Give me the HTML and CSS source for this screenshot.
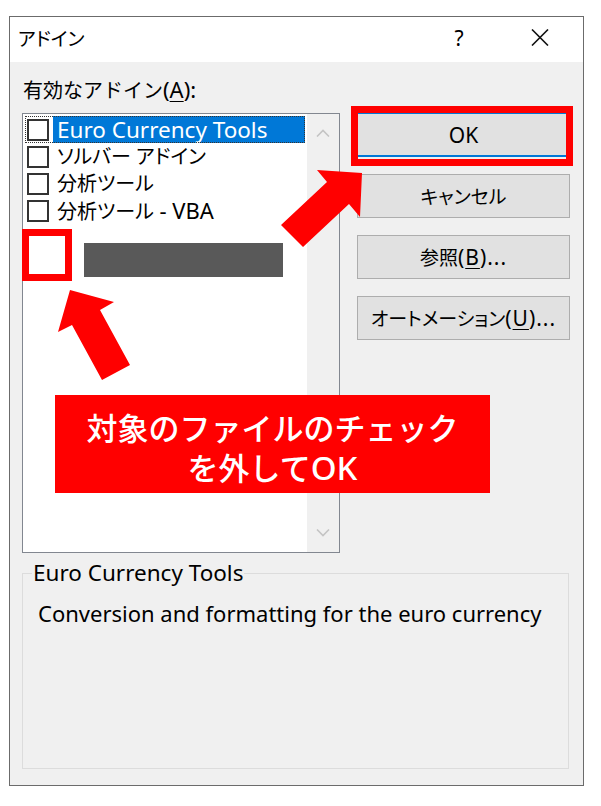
FILE: index.html
```html
<!DOCTYPE html>
<html lang="ja">
<head>
<meta charset="utf-8">
<title>アドイン</title>
<link rel="stylesheet" href="styles.css">
</head>
<body>
<div class="shot">
  <div class="dialog">
    <div class="titlebar">
      <span class="title">アドイン</span>
      <span class="help">?</span>
      <svg class="close" width="18" height="17" viewBox="0 0 18 17"><path d="M1 0.5 L17 16.5 M17 0.5 L1 16.5" stroke="#111" stroke-width="1.6" fill="none"/></svg>
    </div>
    <div class="content">
      <div class="label">有効なアドイン<span class="lat">(<u>A</u>):</span></div>
      <div class="main">
        <div class="listbox">
          <div class="items">
            <div class="item focused"><span class="check"></span><span class="name selected lat">Euro Currency Tools</span></div>
            <div class="item"><span class="check"></span><span class="name">ソルバー アドイン</span></div>
            <div class="item"><span class="check"></span><span class="name">分析ツール</span></div>
            <div class="item"><span class="check"></span><span class="name">分析ツール<span class="lat"> - VBA</span></span></div>
            <div class="item redacted"><span class="blackout"></span></div>
          </div>
          <div class="scrollbar">
            <svg width="14" height="8" viewBox="0 0 14 8"><path d="M1 7.5 L7 1.5 L13 7.5" stroke="#c4c4c4" stroke-width="1.6" fill="none"/></svg>
            <svg width="14" height="8" viewBox="0 0 14 8"><path d="M1 0.5 L7 6.5 L13 0.5" stroke="#c4c4c4" stroke-width="1.6" fill="none"/></svg>
          </div>
        </div>
        <div class="buttons">
          <button class="btn default"><span class="lat">OK</span></button>
          <button class="btn">キャンセル</button>
          <button class="btn">参照<span class="lat">(<u>B</u>)...</span></button>
          <button class="btn">オートメーション<span class="lat">(<u>U</u>)...</span></button>
        </div>
      </div>
      <fieldset class="info">
        <legend>Euro Currency Tools</legend>
        <p>Conversion and formatting for the euro currency</p>
      </fieldset>
    </div>
  </div>

  <!-- annotations drawn over the dialog -->
  <svg class="marks" width="601" height="806" viewBox="0 0 601 806">
    <rect x="354.5" y="109.5" width="215" height="53" fill="none" stroke="#ff0000" stroke-width="7"/>
    <rect x="25.5" y="232.5" width="43" height="45" fill="#fff" stroke="#ff0000" stroke-width="7"/>
    <polygon points="362,173 317,170 327,182 281,225 303,247 349,204 360,217" fill="#ff0000"/>
    <polygon points="70,290 114,302 100,310 130,365 102,380 72,325 58,332" fill="#ff0000"/>
  </svg>
  <div class="callout">対象のファイルのチェック<br>を外して<span class="ok">OK</span></div>
</div>
</body>
</html>
```

FILE: styles.css
```css
body{margin:0;background:#fff;font-family:"Noto Sans","Noto Sans CJK JP",sans-serif;color:#000;font-feature-settings:"palt";}

.shot{position:relative;width:601px;height:806px;padding:16px 0 0 9px;box-sizing:border-box;}

.dialog{width:575px;height:770px;box-sizing:border-box;border:1px solid #6b6b6b;background:#f0f0f0;display:flex;flex-direction:column;}

.titlebar{height:46px;background:#fff;display:flex;align-items:center;padding:0 34px 4px 8px;box-sizing:border-box;}
.title{font-size:19px;}
.help{margin-left:auto;width:20px;text-align:center;font-size:21px;margin-right:62px;}
.close{display:block;}

.lat{font-size:22px;}

.content{flex:1;padding:14px 13px 16px 12px;}
.label{font-size:20px;line-height:26px;margin:0 0 9px 1px;font-feature-settings:normal;}
u{text-decoration-thickness:1px;text-underline-offset:3px;}

.main{display:flex;gap:17px;align-items:flex-start;}

.listbox{width:318px;height:440px;box-sizing:border-box;border:1px solid #828790;background:#fff;display:flex;}
.items{flex:1;padding:2px 2px 0 2px;}
.item{display:flex;align-items:center;height:27px;}
.item.focused{outline:1px dotted #333;outline-offset:-1px;}
.check{width:22px;height:22px;box-sizing:border-box;border:2px solid #333;background:#fff;margin-left:2px;flex:none;}
.name{margin-left:4px;padding-left:4px;font-size:20px;line-height:27px;height:27px;white-space:nowrap;}
.name.lat{font-size:22.5px;}
.name.selected{flex:1;background:#0078d7;color:#fff;}
.item.redacted{height:auto;}
.blackout{display:block;width:199px;height:34px;background:#595959;margin:19px 0 0 59px;}

.scrollbar{width:32px;background:#f0f0f0;display:flex;flex-direction:column;justify-content:space-between;align-items:center;padding:15px 0 15px;box-sizing:border-box;}
.scrollbar svg{display:block;}

.buttons{width:213px;display:flex;flex-direction:column;gap:17px;}
.btn{height:44px;background:#e1e1e1;border:1px solid #adadad;font-family:inherit;font-size:19px;color:#000;padding:0;font-feature-settings:"palt";white-space:nowrap;}
.btn .lat{font-size:21px;letter-spacing:1px;}
.btn.default .lat{letter-spacing:0;}
.btn.default{border-color:#0078d7;border-bottom-width:2px;}

.info{margin:7px 1px 0 0;height:209px;box-sizing:border-box;border:1px solid #dcdcdc;padding:0 15px;}
.info legend{font-size:22.5px;line-height:26px;padding:0 1px;margin-left:-6px;}
.info p{margin:14px 0 0;font-size:22px;line-height:26px;}

.marks{position:absolute;left:0;top:0;pointer-events:none;}

.callout{position:absolute;left:55px;top:395px;width:435px;height:98px;box-sizing:border-box;padding-top:13px;background:#ff0000;color:#fff;font-size:31px;line-height:40px;font-weight:500;text-align:center;font-feature-settings:normal;}
.callout .ok{font-size:33px;}
```
